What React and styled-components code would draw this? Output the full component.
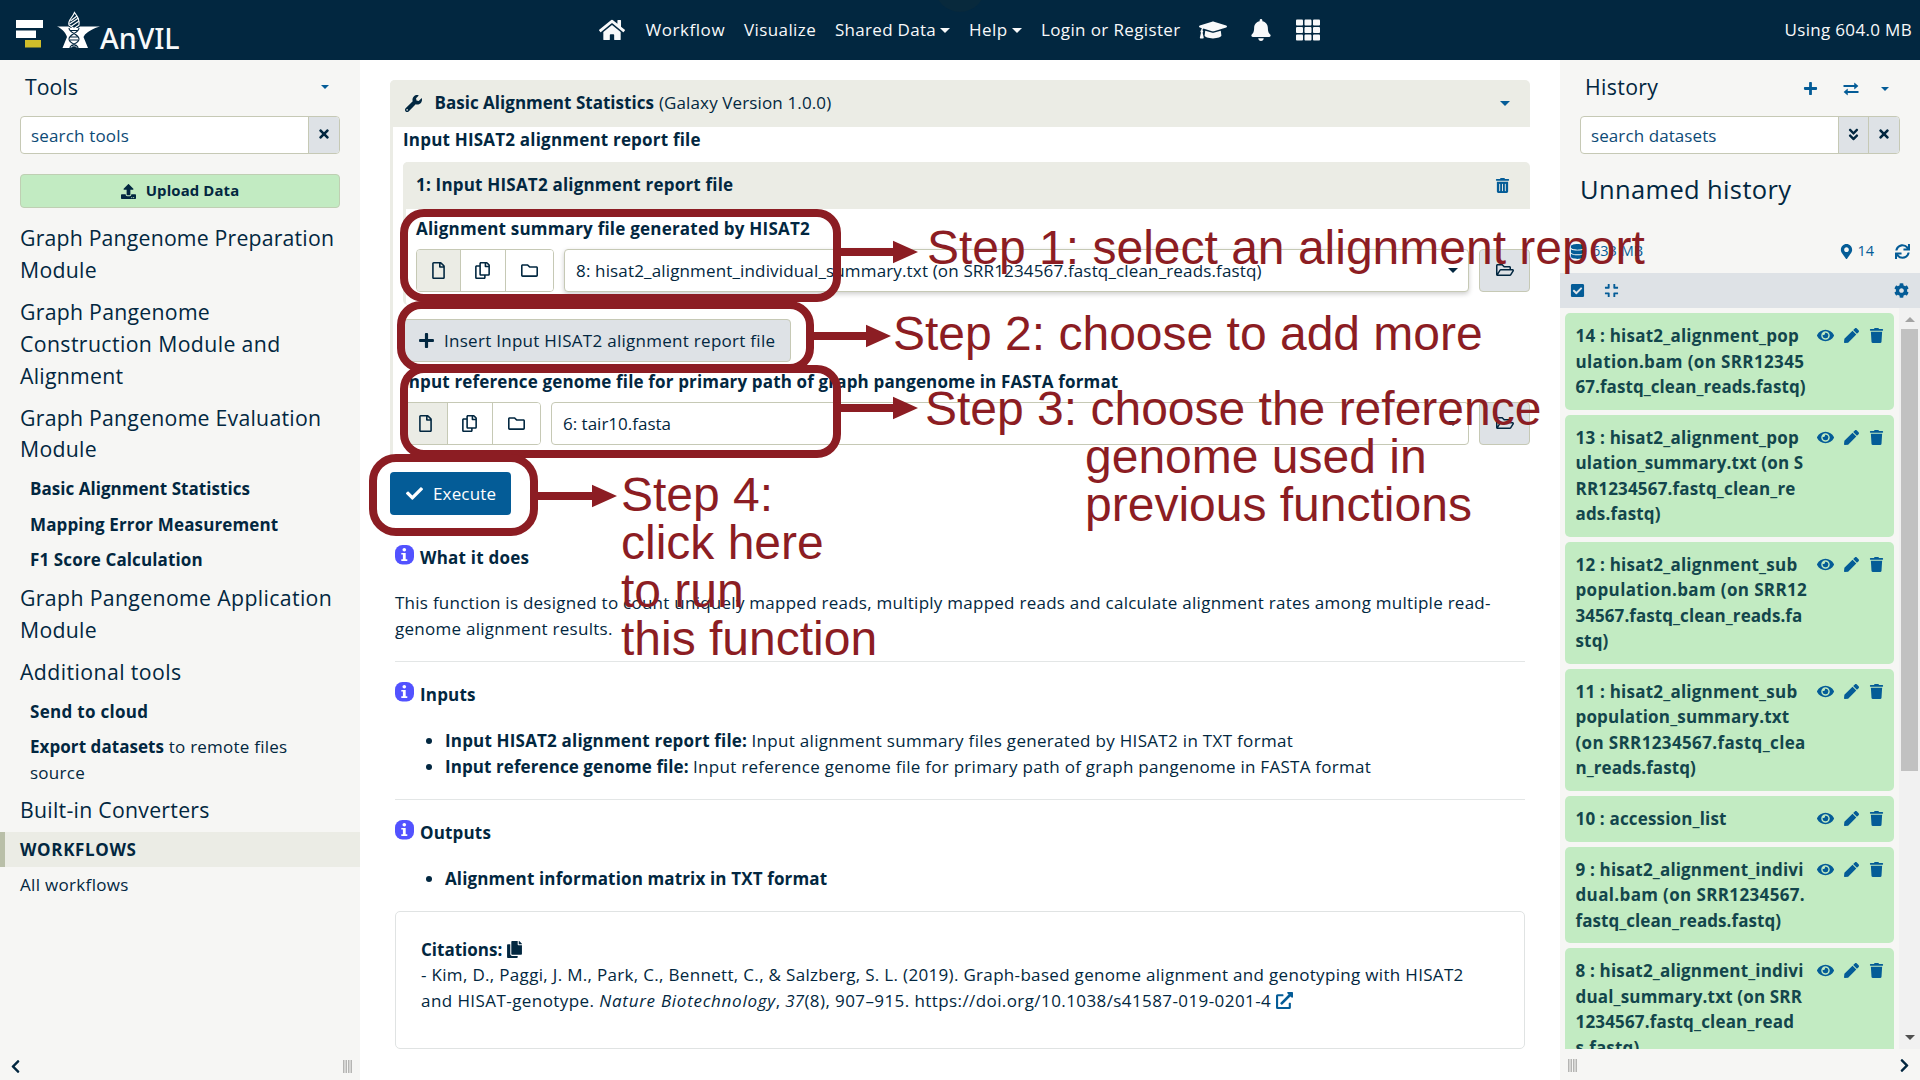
import React from "react";
import styled, { createGlobalStyle } from "styled-components";
import {
  FaHome, FaGraduationCap, FaBell, FaTh, FaWrench, FaTrashAlt, FaTrash, FaUpload, FaTimes,
  FaAngleDoubleDown, FaDatabase, FaMapMarkerAlt, FaSync, FaCheckSquare, FaCompress, FaCog,
  FaEye, FaPen, FaRegFile, FaRegCopy, FaRegFolder, FaRegFolderOpen, FaPlus, FaCheck, FaCopy,
  FaExternalLinkAlt, FaChevronLeft, FaChevronRight,
} from "react-icons/fa";

const ink = "#022740";
const blue = "#045c97";
const line = "#c6c9b5";
const tint = "#ebece5";
const grey = "#dee2e6";
const red = "#8c1d23";

const Global = createGlobalStyle`
  * { box-sizing: border-box; }
  html, body { margin: 0; height: 100%; overflow: hidden; }
  body { font-family: "Open Sans", "Noto Sans", sans-serif; font-size: 17px; line-height: 25.5px; color: ${ink}; background: #fff; }
  svg { display: block; flex: none; }
`;

const T = styled.span`
  white-space: pre;
  letter-spacing: ${(p) => p.$ls ?? (p.$b ? 0.17 : 0.27)}px;
  font-weight: ${(p) => (p.$b ? 700 : "inherit")};
  font-style: ${(p) => (p.$i ? "italic" : "inherit")};
`;

const Page = styled.div`
  position: relative;
  width: 1920px; height: 1080px;
  display: flex; flex-direction: column;
  overflow: hidden;
`;
const Masthead = styled.header`
  position: relative; overflow: hidden;
  height: 60px; flex: none;
  display: flex; align-items: center; justify-content: space-between;
  padding: 0 8px 0 16px;
  background: ${ink}; color: #f8f9fa;
  &::before {
    content: ""; position: absolute; left: 935px; top: -38px; width: 50px; height: 50px;
    border-radius: 50%; background: #08293c;
  }
`;
const Brand = styled.div`display: flex; align-items: flex-end; height: 49px; width: 583px; align-self: flex-start;`;
const BrandName = styled.span`
  font-family: "Noto Sans", sans-serif; font-size: 28.6px; line-height: 23px; font-weight: 500;
`;
const Nav = styled.nav`display: flex; align-items: center; height: 60px; flex: 1;`;
const NavItem = styled.span`
  display: flex; align-items: center; gap: 4px;
  margin-left: ${(p) => p.$ml}px;
  flex: none; width: ${(p) => p.$w}px;
`;
const Caret = styled.span`
  width: 0; height: 0; flex: none; margin-left: ${(p) => p.$ml || 0}px;
  border: ${(p) => p.$s || 5}px solid transparent; border-bottom: 0; border-top-color: ${(p) => p.$c || "currentColor"};
`;
const Columns = styled.div`display: flex; flex: 1; min-height: 0;`;
const Side = styled.aside`
  width: 360px; flex: none; background: #f6f6f4;
  display: flex; flex-direction: column;
`;
const SideHead = styled.div`
  display: flex; align-items: center; height: 56px; flex: none;
  padding: 0 ${(p) => p.$pr}px 3px 25px;
  font-size: 21.25px;
`;
const HeadIcons = styled.span`display: flex; align-items: center; gap: 25px; color: ${blue}; padding-top: 4px;`;
const Grow = styled.span`flex: 1;`;
const Search = styled.div`
  display: flex; height: 38px; flex: none; margin: 0 20px;
  border: 1px solid ${line}; border-radius: 4px; background: #fff; overflow: hidden;
`;
const SearchText = styled.div`flex: 1; padding: 6px 0 0 10px; color: #0d4a76;`;
const SearchBtn = styled.div`
  width: ${(p) => p.$w}px; border-left: 1px solid ${line}; background: ${grey};
  display: flex; align-items: center; justify-content: center; padding-bottom: 2px;
`;
const Upload = styled.div`
  margin: 20px 20px 10px; height: 34px; flex: none;
  display: flex; align-items: center; justify-content: center; gap: 10px;
  border: 1px solid #bfcfb3; border-radius: 4px; background: #c2ebc2;
  font-size: 14.9px; font-weight: 700;
`;
const Section = styled.div`
  padding: 4px 20px 6px; font-size: 21.25px; line-height: 31.9px;
`;
const Tool = styled.div`padding: 5px ${(p) => p.$px || 30}px;`;
const Row = styled.div`white-space: nowrap;`;
const Band = styled.div`
  padding: 5px 15px; height: 35.5px; border-left: 5px solid #b9bfa8; background: ${tint};
`;
const Foot = styled.div`
  flex: none; height: 28px; margin-top: auto;
  display: flex; align-items: center; justify-content: space-between;
  padding: ${(p) => p.$p};
`;
const Grip = styled.div`
  width: 9px; height: 13px;
  background: repeating-linear-gradient(90deg, #b5b5b3 0 1px, #d6d6d4 1px 3px, #b5b5b3 3px 4px, #f6f6f4 4px 5px);
`;
const Main = styled.main`flex: 1; min-width: 0; padding: 20px 30px 0; display: flex; flex-direction: column;`;
const Form = styled.section`border-left: 3px solid ${tint}; border-radius: 5px; height: 378px; flex: none;`;
const FormHead = styled.div`
  height: 47px; margin-left: -3px; padding: ${(p) => p.$p};
  display: flex; align-items: center;
  background: ${tint}; border-radius: 5px 5px 0 0;
`;
const FormTitle = styled.span`display: flex; gap: 5px; margin-left: 12.5px;`;
const FormBody = styled.div`padding-left: 10px;`;
const Label = styled.div`height: ${(p) => p.$h}px; padding-top: ${(p) => p.$pt || 0}px; font-weight: 700;`;
const Repeat = styled.div`border-left: 3px solid ${tint}; border-radius: 5px; height: 143px;`;
const RepeatBody = styled.div`padding-left: 10px;`;
const Field = styled.div`display: flex; height: 42.5px;`;
const Group = styled.div`
  display: flex; width: 137.5px; border: 1px solid ${line}; border-radius: 4px; overflow: hidden; margin-right: 10.5px;
`;
const GroupBtn = styled.div`
  flex: ${(p) => p.$f}; display: flex; align-items: center; justify-content: center;
  background: ${(p) => (p.$on ? tint : "#fff")};
  & + & { border-left: 1px solid ${line}; }
`;
const Select = styled.div`
  flex: 1; display: flex; align-items: center; justify-content: space-between;
  padding: 1px 10px 0 11px; border: 1px solid ${line}; border-radius: 4px; background: #fff;
  box-shadow: ${(p) => (p.$lift ? "0 2px 5px rgba(0,0,0,.2)" : "none")};
`;
const Open = styled.div`
  width: 51px; margin-left: 10.5px; border: 1px solid ${line}; border-radius: 4px; background: ${grey};
  display: flex; align-items: center; justify-content: center;
`;
const Insert = styled.div`
  width: 388px; height: 42.5px; margin-top: 14px; padding: 1px 0 0 14px;
  display: flex; align-items: center; gap: 9px;
  border: 1px solid ${line}; border-radius: 4px; background: ${grey};
`;
const Execute = styled.div`
  width: 121px; height: 43px; margin-top: 14px; padding: 0 0 0 16px; flex: none;
  display: flex; align-items: center; gap: 10px;
  border-radius: 4px; background: ${blue}; color: #fff;
`;
const Help = styled.section`margin: 0 5px; padding-top: 28px; display: flex; flex-direction: column;`;
const HelpTitle = styled.div`
  display: flex; gap: 6px; height: ${(p) => p.$h || 48}px; padding-top: 2px; font-weight: 700;
`;
const Rule = styled.div`height: 1px; background: #e3e6e6; margin: 20px 0 18px;`;
const List = styled.ul`margin: 0; padding: 0 0 0 50px; list-style: disc;`;
const Card = styled.div`
  height: 138px; margin-top: 19px; padding: 25px 25px; border: 1px solid #e0e3e3; border-radius: 5px;
`;
const CardRow = styled.div`display: flex; align-items: center; height: 25.5px; white-space: pre;`;
const Pad = styled.span`margin: 0 0 0 ${(p) => p.$l}px; display: flex;`;

const HistoryName = styled.div`padding: 15px 20px 0 20px; height: 71px; font-size: 25.5px; line-height: 40px;`;
const Stats = styled.div`
  display: flex; align-items: center; height: 44px; margin-top: 4px; padding: 0 10px 0 10px; color: ${blue}; font-size: 14.5px;
`;
const Bar = styled.div`
  display: flex; align-items: center; height: 35px; flex: none; padding: 0 11px 0 10px; background: ${grey}; color: ${blue};
`;
const Scroll = styled.div`display: flex; height: 741px; flex: none; overflow: hidden;`;
const Items = styled.div`width: 339px; padding: 5px 5px 0; display: flex; flex-direction: column; gap: 5px; overflow: hidden;`;
const Item = styled.div`
  flex: none; display: flex; padding: 10px 11px 10px 10.5px; min-height: 46px;
  border-radius: 5px; background: #c2ebc2; color: #13464c;
  line-height: 25.5px;
`;
const ItemText = styled.div`width: 241.5px; flex: none;`;
const ItemIcons = styled.div`display: flex; align-items: center; height: 25px; gap: 10px; color: ${blue};`;
const Track = styled.div`
  width: 21px; background: #f1f1f1; display: flex; flex-direction: column; align-items: center; padding: 9px 0 9px;
`;
const Thumb = styled.div`width: 17px; height: 442px; background: #c1c1c1; margin: 7px 0 auto;`;
const ScrollArrow = styled.span`
  width: 0; height: 0; border: 5px solid transparent;
  ${(p) => (p.$up ? "border-top: 0; border-bottom-color: #a3a3a3;" : "border-bottom: 0; border-top-color: #505050;")}
`;

const Marker = styled.div`
  position: absolute; left: ${(p) => p.$x}px; top: ${(p) => p.$y}px; width: ${(p) => p.$w}px; height: ${(p) => p.$h}px;
  border: 8px solid ${red}; border-radius: ${(p) => p.$r || 24}px;
`;
const ArrowBox = styled.svg`
  position: absolute; left: ${(p) => p.$x}px; top: ${(p) => p.$y}px;
`;
const Note = styled.div`
  position: absolute; left: ${(p) => p.$x}px; top: ${(p) => p.$y}px;
  font: 48px/48px "Liberation Sans", Arial, sans-serif; color: ${red}; white-space: pre;
`;

const Arrow = ({ x, y, w }) => (
  <ArrowBox $x={x} $y={y - 12} width={w} height="24" viewBox={`0 0 ${w} 24`} fill={red}>
    <path d={`M0 8H${w - 25}V.8L${w} 12 ${w - 25} 23.2V16H0z`} />
  </ArrowBox>
);

const Info = () => (
  <svg width="19" height="20" viewBox="0 0 19 20">
    <rect width="19" height="19.5" rx="7.5" fill="#5252ff" />
    <circle cx="9.3" cy="4.8" r="1.8" fill="#fff" />
    <path d="M6.3 8h4.4v6.3h1.6v1.6H6.3v-1.6h1.6V9.6H6.3z" fill="#fff" />
  </svg>
);

const Exchange = () => (
  <svg width="16" height="14" viewBox="0 0 16 14" fill="none" stroke="currentColor" strokeWidth="1.8">
    <path d="M.5 4h11.5M4 10h11.5" />
    <path d="M11.5 1l3.6 3-3.6 3zM4.5 7L.9 10l3.6 3z" fill="currentColor" strokeWidth=".5" />
  </svg>
);

const Logo = () => (
  <svg width="84" height="38" viewBox="16 11 84 38">
    <path fill="#fff" d="M16 20h27v8H16zM16 30.5h20v7.500H16z" />
    <path fill="#d0bd2a" d="M25 40h16v7.500H25z" />
    <path fill="#fff" d="M57 26.500h11.500l2.500 1.500h7l2-1.500h20c-7 2-11 4.500-15 8L83.500 37l4.500 11h-9.500l-4.500-1.500-4.500 1.500h-7l4.500-11c-1-4-5-8.500-10-10.500z" />
    <path fill={ink} stroke="#fff" strokeWidth="1.2" d="M74.500 12.500c4 5 5.500 8 4.500 12.500l-5 3.500-5-3.500c-1.500-5 3.500-7 5.500-12.500z" />
    <path fill="none" stroke="#fff" strokeWidth="1.1" d="M70.500 21l6.500-5M69.500 24l9-6M71 26.500l8-5.500" />
    <path fill="none" stroke={ink} strokeWidth="1.1" d="M69 28c0 5 10 6 10 11s-9 5-9 9M79 28c0 5-10 6-10 11s9 5 9 9M70 30.500h8M70 37h8M70 40h8M72 46h5" />
  </svg>
);

const FileIcons = () => (
  <Group>
    <GroupBtn $on $f="44"><FaRegFile size={17} /></GroupBtn>
    <GroupBtn $f="45"><FaRegCopy size={17} /></GroupBtn>
    <GroupBtn $f="48"><FaRegFolder size={17} /></GroupBtn>
  </Group>
);

const history = [
  ["14 : hisat2_alignment_pop", "ulation.bam (on SRR12345", "67.fastq_clean_reads.fastq)"],
  ["13 : hisat2_alignment_pop", "ulation_summary.txt (on S", "RR1234567.fastq_clean_re", "ads.fastq)"],
  ["12 : hisat2_alignment_sub", "population.bam (on SRR12", "34567.fastq_clean_reads.fa", "stq)"],
  ["11 : hisat2_alignment_sub", "population_summary.txt", "(on SRR1234567.fastq_clea", "n_reads.fastq)"],
  ["10 : accession_list"],
  ["9 : hisat2_alignment_indivi", "dual.bam (on SRR1234567.", "fastq_clean_reads.fastq)"],
  ["8 : hisat2_alignment_indivi", "dual_summary.txt (on SRR", "1234567.fastq_clean_read", "s.fastq)"],
];
const tracking = (text) => {
  if (text.includes("reads.f")) return 0.06;
  if (text.includes("SRR1")) return 0.36;
  if (/^\d+ : hisat2.*(pop|sub)$/.test(text)) return 0.22;
  return 0.17;
};

export default function App() {
  return (
    <Page>
      <Global />
      <Masthead>
        <Brand><Logo /><BrandName>AnVIL</BrandName></Brand>
        <Nav>
          <NavItem $ml={0} $w={26}><FaHome size={26} /></NavItem>
          <NavItem $ml={20.5} $w={78}><T $ls={0.55}>Workflow</T></NavItem>
          <NavItem $ml={20.5} $w={71}><T $ls={0.4}>Visualize</T></NavItem>
          <NavItem $ml={20} $w={114}><T $ls={0.29}>Shared Data</T><Caret /></NavItem>
          <NavItem $ml={20} $w={53}><T $ls={0.5}>Help</T><Caret /></NavItem>
          <NavItem $ml={19} $w={138}><T $ls={0.37}>Login or Register</T></NavItem>
          <NavItem $ml={20} $w={29}><FaGraduationCap size={28} /></NavItem>
          <NavItem $ml={22} $w={20}><FaBell size={22} /></NavItem>
          <NavItem $ml={26} $w={23}><FaTh size={24} /></NavItem>
        </Nav>
        <T $ls={0.33}>Using 604.0 MB</T>
      </Masthead>
      <Columns>
        <Side>
          <SideHead $pr={31}><T $ls={0}>Tools</T><Grow /><Caret $s={4} $c={blue} /></SideHead>
          <Search><SearchText><T $ls={0.17}>search tools</T></SearchText><SearchBtn $w={31}><FaTimes size={14} /></SearchBtn></Search>
          <Upload><FaUpload size={15} /><T $ls={0.12}>Upload Data</T></Upload>
          <Section><Row><T $ls={0.19}>Graph Pangenome Preparation</T></Row><Row><T>Module</T></Row></Section>
          <Section><Row><T>Graph Pangenome</T></Row><Row><T $ls={0.39}>Construction Module and</T></Row><Row><T>Alignment</T></Row></Section>
          <Section><Row><T $ls={0.25}>Graph Pangenome Evaluation</T></Row><Row><T>Module</T></Row></Section>
          <Tool><T $b $ls={0.04}>Basic Alignment Statistics</T></Tool>
          <Tool><T $b $ls={0.14}>Mapping Error Measurement</T></Tool>
          <Tool><T $b $ls={0.13}>F1 Score Calculation</T></Tool>
          <Section><Row><T $ls={0.36}>Graph Pangenome Application</T></Row><Row><T>Module</T></Row></Section>
          <Section><T $ls={0.42}>Additional tools</T></Section>
          <Tool><T $b $ls={0.3}>Send to cloud</T></Tool>
          <Tool><Row><T $b $ls={0.06}>Export datasets</T><T $ls={0.24}> to remote files</T></Row><Row><T>source</T></Row></Tool>
          <Section><T>Built-in Converters</T></Section>
          <Band><T $b $ls={0.65}>WORKFLOWS</T></Band>
          <Tool $px={20}><T $ls={0.32}>All workflows</T></Tool>
          <Foot $p="0 8px 0 8px"><FaChevronLeft size={15} /><Grip /></Foot>
        </Side>
        <Main>
          <Form>
            <FormHead $p="0 20px 1px 15px">
              <FaWrench size={17} />
              <FormTitle><T $b $ls={0.02}>Basic Alignment Statistics</T><T $ls={0.13}>(Galaxy Version 1.0.0)</T></FormTitle>
              <Grow /><Caret $c={blue} />
            </FormHead>
            <FormBody>
              <Label $h={35}><T $b $ls={0.2}>Input HISAT2 alignment report file</T></Label>
              <Repeat>
                <FormHead $p="0 20px 1px 13px"><T $b $ls={0.2}>1: Input HISAT2 alignment report file</T><Grow /><FaTrashAlt size={15} color={blue} /></FormHead>
                <RepeatBody>
                  <Label $h={40} $pt={7}><T $b $ls={0.22}>Alignment summary file generated by HISAT2</T></Label>
                  <Field><FileIcons /><Select $lift><T $ls={0.155}>8: hisat2_alignment_individual_summary.txt (on SRR1234567.fastq_clean_reads.fastq)</T><Caret /></Select><Open><FaRegFolderOpen size={18} /></Open></Field>
                </RepeatBody>
              </Repeat>
              <Insert><FaPlus size={17} /><T $ls={0.28}>Insert Input HISAT2 alignment report file</T></Insert>
              <Label $h={40.5} $pt={7}><T $b $ls={0.155}>Input reference genome file for primary path of graph pangenome in FASTA format</T></Label>
              <Field><FileIcons /><Select><T $ls={0}>6: tair10.fasta</T><Caret /></Select><Open><FaRegFolderOpen size={18} /></Open></Field>
            </FormBody>
          </Form>
          <Execute><FaCheck size={17} /><T $ls={0.15}>Execute</T></Execute>
          <Help>
            <HelpTitle $h={47}><Info /><T $b $ls={0.23}>What it does</T></HelpTitle>
            <Row><T $ls={0.257}>This function is designed to count uniquely mapped reads, multiply mapped reads and calculate alignment rates among multiple read-</T></Row>
            <Row><T>genome alignment results.</T></Row>
            <Rule />
            <HelpTitle><Info /><T $b>Inputs</T></HelpTitle>
            <List>
              <li><T $b $ls={0.18}>Input HISAT2 alignment report file:</T> <T $ls={0.31}>Input alignment summary files generated by HISAT2 in TXT format</T></li>
              <li><T $b $ls={0.08}>Input reference genome file:</T> <T $ls={0.27}>Input reference genome file for primary path of graph pangenome in FASTA format</T></li>
            </List>
            <Rule />
            <HelpTitle><Info /><T $b>Outputs</T></HelpTitle>
            <List><li><T $b $ls={0.14}>Alignment information matrix in TXT format</T></li></List>
            <Card>
              <CardRow><T $b $ls={0}>Citations:</T><Pad $l={4}><FaCopy size={17} /></Pad></CardRow>
              <CardRow><T $ls={0.32}>{"- Kim, D., Paggi, J. M., Park, C., Bennett, C., & Salzberg, S. L. (2019). Graph-based genome alignment and genotyping with HISAT2"}</T></CardRow>
              <CardRow><T $ls={0.43}>{"and HISAT-genotype. "}</T><T $i $ls={0.72}>Nature Biotechnology</T><T>, </T><T $i>37</T><T $ls={0.41}>(8), 907–915. https://doi.org/10.1038/s41587-019-0201-4</T><Pad $l={5}><FaExternalLinkAlt size={17} color={blue} /></Pad></CardRow>
            </Card>
          </Help>
        </Main>
        <Side>
          <SideHead $pr={31}><T $ls={0.35}>History</T><Grow /><HeadIcons><FaPlus size={15} /><Exchange /><Caret $s={4} $ml={-3} /></HeadIcons></SideHead>
          <Search><SearchText><T $ls={0.09}>search datasets</T></SearchText><SearchBtn $w={30}><FaAngleDoubleDown size={15} /></SearchBtn><SearchBtn $w={31}><FaTimes size={14} /></SearchBtn></Search>
          <HistoryName><T $ls={0.36}>Unnamed history</T></HistoryName>
          <Stats>
            <FaDatabase size={15} /><Pad $l={7}><T $ls={0}>633 MB</T></Pad><Grow />
            <FaMapMarkerAlt size={15} /><Pad $l={3}><T $ls={0}>14</T></Pad><Pad $l={21}><FaSync size={15} /></Pad>
          </Stats>
          <Bar><FaCheckSquare size={15} /><Pad $l={19}><FaCompress size={15} /></Pad><Grow /><FaCog size={15} /></Bar>
          <Scroll>
            <Items>{history.map((h) => (
              <Item key={h[0]}>
                <ItemText>{h.map((l) => <Row key={l}><T $b $ls={tracking(l)}>{l}</T></Row>)}</ItemText>
                <ItemIcons><FaEye size={17} /><FaPen size={15} /><FaTrash size={15} /></ItemIcons>
              </Item>
            ))}</Items>
            <Track><ScrollArrow $up /><Thumb /><ScrollArrow /></Track>
          </Scroll>
          <Foot $p="0 8px 2px 8px"><Grip /><FaChevronRight size={15} /></Foot>
        </Side>
      </Columns>
      <Marker $x={400} $y={209} $w={441} $h={93} />
      <Marker $x={397} $y={301} $w={417} $h={71} />
      <Marker $x={400} $y={365} $w={441} $h={93} />
      <Marker $x={369} $y={454} $w={169} $h={82} $r={27} />
      <Arrow x={840} y={252} w={78} />
      <Arrow x={813} y={336} w={78} />
      <Arrow x={840} y={408} w={78} />
      <Arrow x={537} y={495.5} w={80} />
      <Note $x={927} $y={224}>Step 1: select an alignment report</Note>
      <Note $x={893} $y={310}>Step 2: choose to add more</Note>
      <Note $x={925} $y={385}>Step 3: choose the reference</Note>
      <Note $x={1085} $y={433}>{"genome used in\nprevious functions"}</Note>
      <Note $x={621} $y={470.5}>{"Step 4:\nclick here\nto run\nthis function"}</Note>
    </Page>
  );
}
